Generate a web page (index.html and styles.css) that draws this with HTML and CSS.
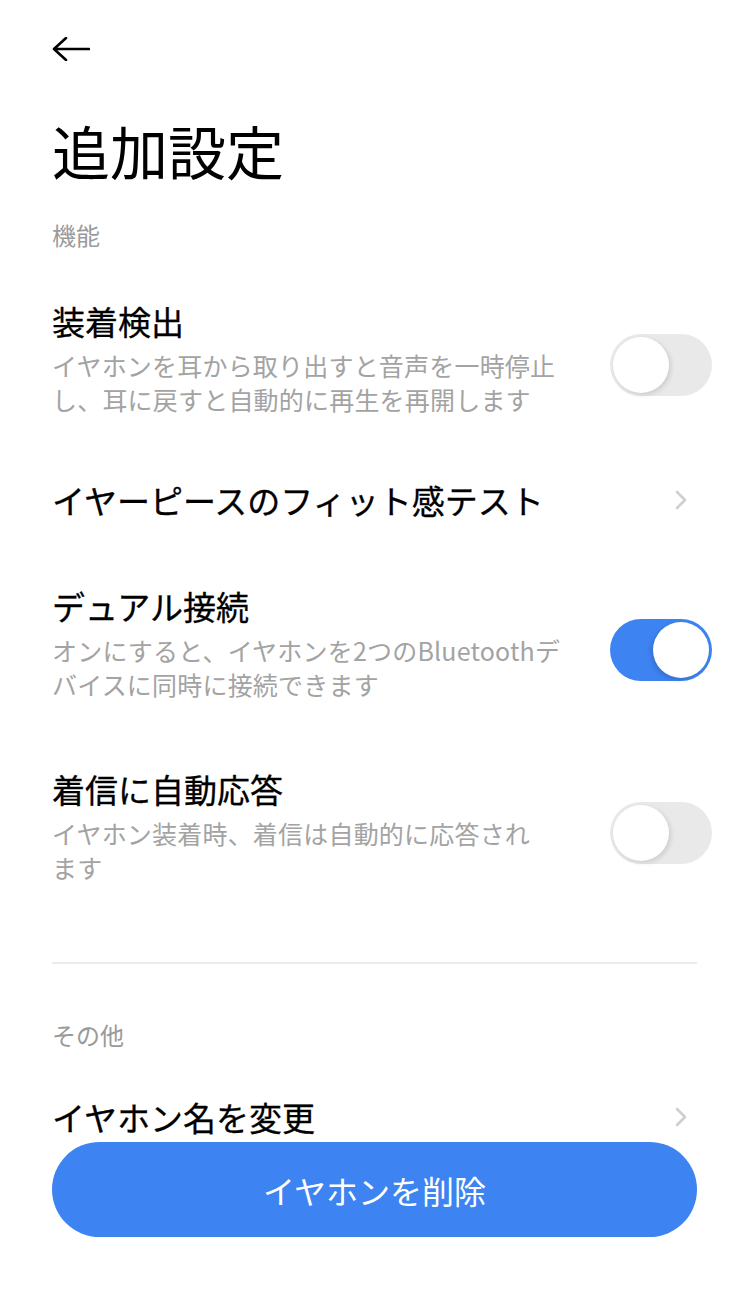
FILE: index.html
```html
<!DOCTYPE html>
<html lang="ja">
<head>
    <meta charset="UTF-8">
    <meta name="viewport" content="width=device-width, initial-scale=1.0">
    <title>追加設定</title>
    <link rel="stylesheet" href="styles.css">
</head>
<body>
    <div class="page">
        <div class="topbar">
            <a href="#" class="back">
                <svg width="38" height="24" viewBox="0 0 38 24">
                    <path d="M2 12 H37 M14 1 L2 12 L14 23" fill="none" stroke="#000" stroke-width="2.6" stroke-linecap="round" stroke-linejoin="round"/>
                </svg>
            </a>
        </div>

        <h1>追加設定</h1>

        <div class="label first">機能</div>

        <div class="row">
            <div class="text">
                <div class="name">装着検出</div>
                <div class="desc">イヤホンを耳から取り出すと音声を一時停止<br>し、耳に戻すと自動的に再生を再開します</div>
            </div>
            <div class="switch"><span></span></div>
        </div>

        <div class="row link">
            <div class="text">
                <div class="name">イヤーピースのフィット感テスト</div>
            </div>
            <svg class="arrow" width="14" height="22" viewBox="0 0 14 22">
                <path d="M3 3 L11 11 L3 19" fill="none" stroke="#cfcfcf" stroke-width="2.6" stroke-linecap="round" stroke-linejoin="round"/>
            </svg>
        </div>

        <div class="row">
            <div class="text">
                <div class="name">デュアル接続</div>
                <div class="desc">オンにすると、イヤホンを2つのBluetoothデ<br>バイスに同時に接続できます</div>
            </div>
            <div class="switch on"><span></span></div>
        </div>

        <div class="row">
            <div class="text">
                <div class="name">着信に自動応答</div>
                <div class="desc">イヤホン装着時、着信は自動的に応答され<br>ます</div>
            </div>
            <div class="switch"><span></span></div>
        </div>

        <div class="line"></div>

        <div class="label">その他</div>

        <div class="row link">
            <div class="text">
                <div class="name">イヤホン名を変更</div>
            </div>
            <svg class="arrow" width="14" height="22" viewBox="0 0 14 22">
                <path d="M3 3 L11 11 L3 19" fill="none" stroke="#cfcfcf" stroke-width="2.6" stroke-linecap="round" stroke-linejoin="round"/>
            </svg>
        </div>
    </div>

    <button class="remove">イヤホンを削除</button>
</body>
</html>
```

FILE: styles.css
```css
* {
    padding: 0px;
    margin: 0px;
    box-sizing: border-box;
}

body {
    background-color: #fff;
    font-family: "Noto Sans CJK JP", "Noto Sans", sans-serif;
    color: #000;
}

.page {
    padding: 0px 38px 0px 52px;
}

.topbar {
    height: 98px;
    display: flex;
    align-items: center;
}

.back {
    display: flex;
    width: 38px;
    height: 24px;
}

h1 {
    margin-top: 15px;
    font-size: 58px;
    font-weight: 400;
    line-height: 74px;
}

.label {
    margin-bottom: 14px;
    font-size: 24px;
    line-height: 34px;
    color: #9a9a9a;
}

.label.first {
    margin-top: 31px;
}

.row {
    display: flex;
    align-items: center;
    justify-content: space-between;
    padding: 33px 0px;
}

.row.link {
    padding: 29px 0px;
}

.name {
    font-size: 33px;
    font-weight: 400;
    line-height: 44px;
    -webkit-text-stroke: 0.3px #000;
}

.desc {
    margin-top: 5px;
    font-size: 25px;
    line-height: 34px;
    letter-spacing: 0.2px;
    color: #a3a3a3;
}

.arrow {
    margin-right: 24px;
}

.switch {
    flex-shrink: 0;
    width: 102px;
    height: 62px;
    margin-top: 14px;
    padding: 3px;
    border-radius: 31px;
    background-color: #e9e9e9;
    display: flex;
}

.switch span {
    width: 56px;
    height: 56px;
    border-radius: 50%;
    background-color: #fff;
    box-shadow: 2px 2px 5px rgba(0, 0, 0, 0.12);
}

.switch.on {
    background-color: #3d84f2;
    justify-content: flex-end;
}

.switch.on span {
    box-shadow: -2px 2px 5px rgba(0, 0, 0, 0.15);
}

.line {
    height: 2px;
    margin: 45px 15px 54px 0px;
    background-color: #ebebeb;
}

.remove {
    position: fixed;
    left: 52px;
    right: 53px;
    bottom: 53px;
    height: 95px;
    border: none;
    border-radius: 48px;
    outline: none;
    background-color: #3d84f2;
    color: #fff;
    font-family: "Noto Sans CJK JP", "Noto Sans", sans-serif;
    font-size: 32px;
    font-weight: 400;
    cursor: pointer;
}
```
